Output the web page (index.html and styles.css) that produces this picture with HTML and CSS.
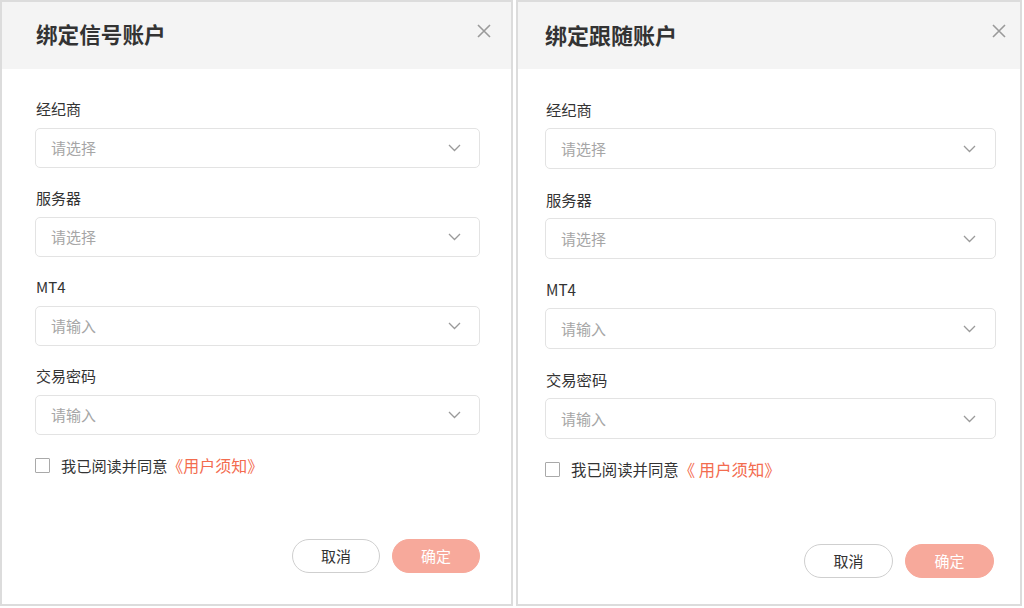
FILE: index.html
```html
<!DOCTYPE html>
<html lang="zh-CN">
<head>
<meta charset="utf-8">
<title>绑定账户</title>
<link rel="stylesheet" href="styles.css">
</head>
<body>
<div class="screen">
  <section class="dialog dialog-signal">
    <header class="dialog-head">
      <h2 class="dialog-title">绑定信号账户</h2>
      <svg class="close" width="14" height="14" viewBox="0 0 14 14"><path d="M1 1L13 13M13 1L1 13" stroke="#9a9a9a" stroke-width="1.6" fill="none"/></svg>
    </header>
    <div class="dialog-body">
      <div class="field">
        <label class="field-label">经纪商</label>
        <div class="select"><span class="placeholder">请选择</span><svg class="chev" width="13" height="8" viewBox="0 0 13 8"><path d="M1 1l5.5 5.5L12 1" fill="none" stroke="#9a9a9a" stroke-width="1.3"/></svg></div>
      </div>
      <div class="field">
        <label class="field-label">服务器</label>
        <div class="select"><span class="placeholder">请选择</span><svg class="chev" width="13" height="8" viewBox="0 0 13 8"><path d="M1 1l5.5 5.5L12 1" fill="none" stroke="#9a9a9a" stroke-width="1.3"/></svg></div>
      </div>
      <div class="field">
        <label class="field-label">MT4</label>
        <div class="select"><span class="placeholder">请输入</span><svg class="chev" width="13" height="8" viewBox="0 0 13 8"><path d="M1 1l5.5 5.5L12 1" fill="none" stroke="#9a9a9a" stroke-width="1.3"/></svg></div>
      </div>
      <div class="field">
        <label class="field-label">交易密码</label>
        <div class="select"><span class="placeholder">请输入</span><svg class="chev" width="13" height="8" viewBox="0 0 13 8"><path d="M1 1l5.5 5.5L12 1" fill="none" stroke="#9a9a9a" stroke-width="1.3"/></svg></div>
      </div>
      <div class="agree"><span class="box"></span><span class="agree-text">我已阅读并同意</span><span class="link">《用户须知》</span></div>
      <div class="actions">
        <button class="btn btn-cancel">取消</button>
        <button class="btn btn-ok">确定</button>
      </div>
    </div>
  </section>
  <section class="dialog dialog-follow">
    <header class="dialog-head">
      <h2 class="dialog-title">绑定跟随账户</h2>
      <svg class="close" width="14" height="14" viewBox="0 0 14 14"><path d="M1 1L13 13M13 1L1 13" stroke="#9a9a9a" stroke-width="1.6" fill="none"/></svg>
    </header>
    <div class="dialog-body">
      <div class="field">
        <label class="field-label">经纪商</label>
        <div class="select"><span class="placeholder">请选择</span><svg class="chev" width="13" height="8" viewBox="0 0 13 8"><path d="M1 1l5.5 5.5L12 1" fill="none" stroke="#9a9a9a" stroke-width="1.3"/></svg></div>
      </div>
      <div class="field">
        <label class="field-label">服务器</label>
        <div class="select"><span class="placeholder">请选择</span><svg class="chev" width="13" height="8" viewBox="0 0 13 8"><path d="M1 1l5.5 5.5L12 1" fill="none" stroke="#9a9a9a" stroke-width="1.3"/></svg></div>
      </div>
      <div class="field">
        <label class="field-label">MT4</label>
        <div class="select"><span class="placeholder">请输入</span><svg class="chev" width="13" height="8" viewBox="0 0 13 8"><path d="M1 1l5.5 5.5L12 1" fill="none" stroke="#9a9a9a" stroke-width="1.3"/></svg></div>
      </div>
      <div class="field">
        <label class="field-label">交易密码</label>
        <div class="select"><span class="placeholder">请输入</span><svg class="chev" width="13" height="8" viewBox="0 0 13 8"><path d="M1 1l5.5 5.5L12 1" fill="none" stroke="#9a9a9a" stroke-width="1.3"/></svg></div>
      </div>
      <div class="agree"><span class="box"></span><span class="agree-text">我已阅读并同意</span><span class="link">《 用户须知》</span></div>
      <div class="actions">
        <button class="btn btn-cancel">取消</button>
        <button class="btn btn-ok">确定</button>
      </div>
    </div>
  </section>
</div>
</body>
</html>
```
FILE: styles.css
```css
* { box-sizing: border-box; }
html, body { margin: 0; padding: 0; background: #ffffff; }
body {
  width: 1024px;
  height: 608px;
  overflow: hidden;
  font-family: "Noto Sans CJK SC", "Noto Sans", "Liberation Sans", sans-serif;
  color: #333;
}
.screen {
  display: flex;
  gap: 3px;
  align-items: flex-start;
}
.dialog {
  height: 606px;
  border: 2px solid #dcdcdc;
  background: #fff;
  display: flex;
  flex-direction: column;
}
.dialog-signal { width: 513px; }
.dialog-follow { width: 506px; }

.dialog-head {
  height: 67px;
  background: #f4f4f4;
  display: flex;
  align-items: center;
  justify-content: space-between;
  flex: none;
}
.dialog-signal .dialog-head { padding: 0 20px 4px 34px; }
.dialog-follow .dialog-head { padding: 0 14px 4px 27px; }
.dialog-title {
  margin: 0;
  font-size: 21.6px;
  line-height: 28px;
  font-weight: 700;
  color: #333;
}
.dialog-follow .dialog-title { font-size: 22px; }
.close {
  display: block;
  margin-top: -6px;
}

.dialog-body {
  display: flex;
  flex-direction: column;
  flex: 1;
}
.dialog-signal .dialog-body { padding: 30px 31px 0 33px; }
.dialog-follow .dialog-body { padding: 30px 24px 0 27px; }

.field { display: flex; flex-direction: column; margin-bottom: 20px; }
.field-label {
  font-size: 15px;
  line-height: 20px;
  color: #333;
  margin-bottom: 9px;
  padding-left: 1px;
}
.dialog-follow .field-label { font-size: 15.3px; }
.select {
  height: 40px;
  border: 1px solid #e3e3e3;
  border-radius: 5px;
  display: flex;
  align-items: center;
  justify-content: space-between;
  padding: 0 18px 0 15px;
}
.dialog-follow .select { height: 41px; padding-right: 19px; }
.placeholder {
  font-size: 15px;
  color: #a6a6a6;
  line-height: 20px;
}
.chev { display: block; }

.agree {
  display: flex;
  align-items: center;
  margin-top: 2px;
  height: 16px;
}
.box {
  width: 15px;
  height: 15px;
  border: 1.5px solid #a9a9a9;
  border-radius: 1px;
  margin-right: 11px;
  flex: none;
}
.agree-text { font-size: 15.2px; line-height: 20px; color: #333; }
.dialog-follow .agree-text { font-size: 15.4px; }
.link { font-size: 16px; line-height: 20px; color: #f36c4f; }
.dialog-follow .link { font-size: 16.4px; }

.actions {
  display: flex;
  justify-content: flex-end;
  gap: 12px;
  margin-top: 66px;
}
.dialog-follow .actions { margin-top: 67px; gap: 12px; padding-right: 2px; }
.btn {
  height: 34px;
  width: 88px;
  border-radius: 17px;
  font-family: inherit;
  font-size: 15px;
  line-height: 20px;
  padding: 0;
}
.dialog-follow .btn { width: 89px; height: 34px; }
.btn-cancel {
  background: #fff;
  border: 1px solid #cfcfcf;
  color: #333;
}
.btn-ok {
  background: #f7a99b;
  border: 1px solid #f7a99b;
  color: #fff;
}
```
